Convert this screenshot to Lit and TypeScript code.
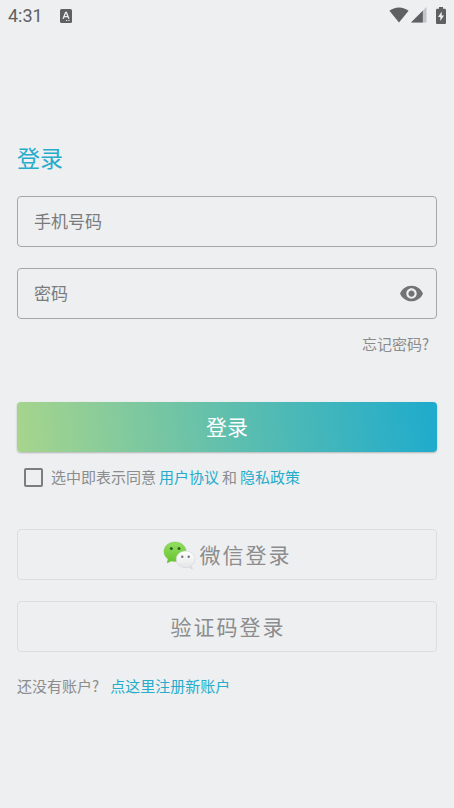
import { LitElement, html, css } from "lit";
import { customElement, state } from "lit/decorators.js";

@customElement("status-bar")
class StatusBar extends LitElement {
  static styles = css`
    :host {
      display: flex;
      align-items: center;
      height: 32px;
      padding: 0 8px;
      color: #5f6062;
      font: 18px/32px Roboto, sans-serif;
    }
    svg {
      display: block;
      fill: currentColor;
    }
    .notice {
      margin-left: 17px;
    }
    .system {
      display: flex;
      align-items: center;
      height: 30px;
      margin: 0 0 2px auto;
    }
    .signal {
      margin: 0 9px 0 2px;
    }
    .faint {
      opacity: 0.3;
    }
    .cut {
      fill: #eeeff1;
    }
  `;

  render() {
    return html`
      <span>4:31</span>
      <svg class="notice" width="12" height="14" viewBox="0 0 12 14" aria-hidden="true">
        <rect width="12" height="14" rx="1.5" />
        <path class="cut" fill-rule="evenodd" d="M5.2 2.8h1.7l2.7 7H8.1L7.5 8.2H4.5L3.9 9.8H2.4zM4.9 7h2.2L6 4.2zM6 11h1.2v1H6zM8.3 11h1.2v1H8.3z" />
      </svg>
      <div class="system">
        <svg width="20" height="16" viewBox="0 0 20 16" aria-hidden="true">
          <path d="M10 15.6.4 3.8C3 1.7 6.3.4 10 .4s7 1.3 9.6 3.4z" />
        </svg>
        <svg class="signal" width="16" height="16" viewBox="0 0 16 16" aria-hidden="true">
          <path class="faint" d="M0 15.500 15.500 0v15.500z" />
          <path d="M0 15.500 11.800 3.700v11.800z" />
        </svg>
        <svg width="10" height="17" viewBox="0 0 10 17" aria-hidden="true">
          <path d="M3 0h4v1.700h1.700c.7 0 1.300.6 1.300 1.300v12.700c0 .7-.6 1.300-1.300 1.300H1.300C.6 17 0 16.400 0 15.700V3c0-.7.6-1.300 1.300-1.300H3z" />
          <path class="cut" d="M5.700 4.500 2 10h2.300v4L8 8.500H5.700z" />
        </svg>
      </div>
    `;
  }
}

@customElement("app-root")
class AppRoot extends LitElement {
  @state() private revealed = false;

  static styles = css`
    :host {
      display: block;
      min-height: 100vh;
      background: #eeeff1;
      color: #8b8c8d;
      font: 15px/20px "Noto Sans CJK SC", sans-serif;
    }
    * {
      box-sizing: border-box;
    }
    main {
      padding: 107px 17px 40px;
    }
    h1 {
      margin: 0 0 21px;
      color: #26accb;
      font-size: 23px;
      font-weight: 400;
      line-height: 36px;
    }
    a {
      color: #26accb;
      text-decoration: none;
    }
    .field {
      display: flex;
      align-items: center;
      height: 51px;
      margin-bottom: 21px;
      padding: 0 12px 0 16px;
      border: 1px solid #a6a7a9;
      border-radius: 4px;
    }
    .field input {
      flex: 1;
      min-width: 0;
      padding: 0 0 2px;
      border: 0;
      outline: 0;
      background: none;
      color: #444;
      font: inherit;
      font-size: 17px;
      line-height: 24px;
    }
    .field input::placeholder {
      color: #7a7b7c;
      opacity: 1;
    }
    .reveal {
      padding: 0;
      border: 0;
      background: none;
      color: #727375;
    }
    .reveal svg {
      display: block;
      fill: currentColor;
    }
    .forgot {
      display: flex;
      justify-content: flex-end;
      margin: -6px 8px 48px;
    }
    .forgot a {
      color: inherit;
    }
    .button {
      display: flex;
      align-items: center;
      justify-content: center;
      width: 100%;
      height: 51px;
      padding: 0 0 2px 2px;
      border: 1px solid #dcdddf;
      border-radius: 4px;
      background: none;
      color: #8b8c8d;
      font: inherit;
      font-size: 21px;
      letter-spacing: 2px;
    }
    .primary {
      height: 50px;
      padding: 0 0 2px;
      border: 0;
      background: linear-gradient(84deg, #a7d58c, #60bfad 50%, #1eabcd);
      box-shadow: 0 1px 2px rgba(0, 0, 0, 0.25);
      color: #fff;
      letter-spacing: normal;
    }
    .agree {
      display: flex;
      align-items: center;
      gap: 3px;
      margin: 15px 0 42px 7px;
    }
    .agree input {
      appearance: none;
      width: 19px;
      height: 19px;
      margin: 0 5px 0 0;
      border: 2px solid #7c7d7f;
      border-radius: 2px;
    }
    .agree input:checked {
      background: #26accb;
    }
    .wechat {
      gap: 4px;
      margin-bottom: 21px;
      padding-left: 0;
    }
    .wechat svg {
      margin-top: 4px;
    }
    .register {
      display: flex;
      gap: 11px;
      margin: 24px 0 0;
    }
  `;

  render() {
    return html`
      <status-bar></status-bar>
      <main>
        <h1>登录</h1>
        <div class="field">
          <input type="tel" placeholder="手机号码" aria-label="手机号码" />
        </div>
        <div class="field">
          <input type=${this.revealed ? "text" : "password"} placeholder="密码" aria-label="密码" />
          <button
            class="reveal"
            type="button"
            aria-label="显示密码"
            @click=${() => (this.revealed = !this.revealed)}
          >
            <svg width="25" height="25" viewBox="0 0 24 24">
              <path d="M12 4.500C7 4.500 2.730 7.610 1 12c1.730 4.390 6 7.500 11 7.500s9.270-3.110 11-7.500c-1.730-4.390-6-7.500-11-7.500zM12 17c-2.760 0-5-2.240-5-5s2.240-5 5-5 5 2.240 5 5-2.240 5-5 5zm0-8c-1.660 0-3 1.340-3 3s1.340 3 3 3 3-1.340 3-3-1.340-3-3-3z" />
            </svg>
          </button>
        </div>
        <div class="forgot"><a href="#forgot">忘记密码?</a></div>
        <button class="button primary" type="button">登录</button>
        <div class="agree">
          <input id="agree" type="checkbox" />
          <label for="agree">选中即表示同意</label>
          <a href="#terms">用户协议</a>
          <span>和</span>
          <a href="#privacy">隐私政策</a>
        </div>
        <button class="button wechat" type="button">
          <svg width="33" height="29" viewBox="0 0 33 29" aria-hidden="true">
            <defs>
              <linearGradient id="green" x2="0" y2="1">
                <stop offset="0" stop-color="#92df61" />
                <stop offset="1" stop-color="#67c22d" />
              </linearGradient>
              <linearGradient id="white" x2="0" y2="1">
                <stop offset="0" stop-color="#ffffff" />
                <stop offset="1" stop-color="#e0e3e5" />
              </linearGradient>
            </defs>
            <path fill="url(#green)" stroke="#67b83b" stroke-width=".4" d="M12 1C5.600 1 1 5.300 1 10.600c0 3.200 1.600 5.700 4 7.400L4.200 22l4-2.100c1.200.3 2.500.5 3.800.5 6.300 0 11-4.300 11-9.800S18.300 1 12 1z" />
            <circle cx="8.300" cy="7.600" r="1.500" fill="#33611d" />
            <circle cx="16" cy="7.600" r="1.500" fill="#33611d" />
            <path fill="url(#white)" stroke="#c9cdcf" stroke-width=".5" d="M22.500 10c-5.300 0-9.300 3.700-9.300 8.300s4 8.300 9.300 8.300c1.100 0 2.200-.2 3.200-.5l3.600 1.900-.9-3.400c2.200-1.500 3.500-3.700 3.500-6.300 0-4.600-4.100-8.300-9.400-8.300z" />
            <circle cx="19.300" cy="15.700" r="1.200" fill="#737779" />
            <circle cx="25.700" cy="15.700" r="1.200" fill="#737779" />
          </svg>
          <span>微信登录</span>
        </button>
        <button class="button" type="button">验证码登录</button>
        <p class="register">
          <span>还没有账户?</span>
          <a href="#register">点这里注册新账户</a>
        </p>
      </main>
    `;
  }
}
